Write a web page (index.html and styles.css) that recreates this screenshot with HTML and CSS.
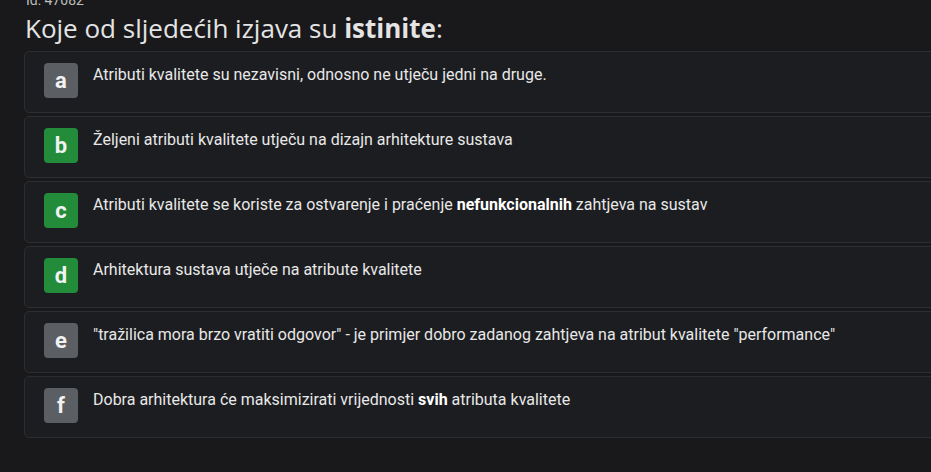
FILE: index.html
```html
<!DOCTYPE html>
<html lang="hr">
<head>
<meta charset="utf-8">
<link rel="stylesheet" href="styles.css">
</head>
<body>
<div class="page">
  <div class="qid">Id: 47082</div>
  <h1 class="title">Koje od sljedećih izjava su <b>istinite</b>:</h1>
  <div class="answers">
    <div class="answer"><span class="badge gray">a</span><span class="text">Atributi kvalitete su nezavisni, odnosno ne utječu jedni na druge.</span></div>
    <div class="answer"><span class="badge green">b</span><span class="text">Željeni atributi kvalitete utječu na dizajn arhitekture sustava</span></div>
    <div class="answer"><span class="badge green">c</span><span class="text">Atributi kvalitete se koriste za ostvarenje i praćenje <b>nefunkcionalnih</b> zahtjeva na sustav</span></div>
    <div class="answer"><span class="badge green">d</span><span class="text">Arhitektura sustava utječe na atribute kvalitete</span></div>
    <div class="answer"><span class="badge gray">e</span><span class="text">"tražilica mora brzo vratiti odgovor" - je primjer dobro zadanog zahtjeva na atribut kvalitete "performance"</span></div>
    <div class="answer"><span class="badge gray">f</span><span class="text">Dobra arhitektura će maksimizirati vrijednosti <b>svih</b> atributa kvalitete</span></div>
  </div>
</div>
</body>
</html>
```
FILE: styles.css
```css
html, body {
  margin: 0;
  padding: 0;
  background: #19191b;
  overflow: hidden;
  width: 931px;
  height: 472px;
}
body {
  font-family: "Roboto", "Liberation Sans", sans-serif;
  color: #e6e6e6;
}
.page {
  padding-left: 24px;
  width: 1000px;
  margin-top: -9px;
}
.qid {
  font-size: 14px;
  line-height: 18px;
  color: #bdbdbd;
  padding-left: 2px;
}
.title {
  margin: 0 0 6px 0;
  padding-top: 2px;
  font-family: "Open Sans", "Roboto", sans-serif;
  font-size: 26px;
  line-height: 34px;
  font-weight: 400;
  color: #e4e4e4;
  padding-left: 1px;
}
.title b {
  font-weight: 700;
}
.answers {
  display: flex;
  flex-direction: column;
  gap: 3px;
}
.answer {
  display: flex;
  align-items: flex-start;
  border: 1px solid #2c2d30;
  border-radius: 5px;
  background: #1c1d20;
  padding: 11px 0 0 19px;
  box-sizing: border-box;
  height: 62px;
}
.badge {
  flex: none;
  width: 34px;
  height: 35px;
  border-radius: 4px;
  display: flex;
  align-items: center;
  justify-content: center;
  font-size: 22px;
  font-weight: 700;
  color: #f2f2f2;
}
.badge.gray { background: #5b5e62; }
.badge.green { background: #228c3b; }
.text {
  margin-left: 15px;
  font-size: 16px;
  line-height: 20px;
  margin-top: 2px;
  color: #e8e8e8;
}
.text b { font-weight: 700; color: #ffffff; }
```
